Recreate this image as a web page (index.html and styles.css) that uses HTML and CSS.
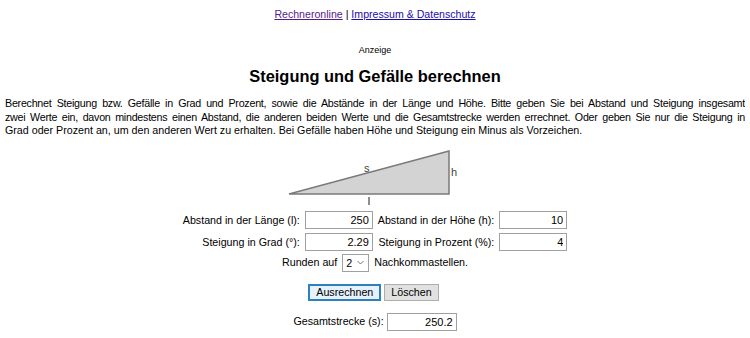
FILE: index.html
```html
<!DOCTYPE html>
<html lang="de">
<head>
  <meta charset="UTF-8" />
  <title>Steigung und Gefälle berechnen</title>
  <link rel="stylesheet" href="styles.css">
</head>
<body>

<div class="topnav">
  <a href="#" class="visited">Rechneronline</a> | <a href="#">Impressum &amp; Datenschutz</a>
</div>

<div class="ad">Anzeige</div>

<h1>Steigung und Gefälle berechnen</h1>

<div class="intro">
  <div class="intro-full">Berechnet Steigung bzw. Gefälle in Grad und Prozent, sowie die Abstände in der Länge und Höhe. Bitte geben Sie bei Abstand und Steigung insgesamt<br>zwei Werte ein, davon mindestens einen Abstand, die anderen beiden Werte und die Gesamtstrecke werden errechnet. Oder geben Sie nur die Steigung in</div>
  <div>Grad oder Prozent an, um den anderen Wert zu erhalten. Bei Gefälle haben Höhe und Steigung ein Minus als Vorzeichen.</div>
</div>

<div class="figure">
  <svg width="180" height="58" viewBox="0 0 180 58">
    <polygon points="4,46 164,3 164,46" fill="#d3d3d3" stroke="#7a7a7a" stroke-width="1.5" />
    <text x="79" y="24" class="lbl">s</text>
    <text x="166" y="28" class="lbl">h</text>
    <line x1="84" y1="49" x2="84" y2="57" stroke="#444" stroke-width="1.2" />
  </svg>
</div>

<form class="calc">
  <table class="fields">
    <tr>
      <td class="lab">Abstand in der Länge (l):</td>
      <td><input type="text" class="num" value="250"></td>
      <td class="lab">Abstand in der Höhe (h):</td>
      <td><input type="text" class="num" value="10"></td>
    </tr>
    <tr>
      <td class="lab">Steigung in Grad (°):</td>
      <td><input type="text" class="num" value="2.29"></td>
      <td class="lab">Steigung in Prozent (%):</td>
      <td><input type="text" class="num" value="4"></td>
    </tr>
  </table>

  <div class="round">
    Runden auf
    <span class="select">2
      <svg class="caret" width="7" height="5" viewBox="0 0 7 5"><polyline points="0.5,1 3.5,4 6.5,1" fill="none" stroke="#777" stroke-width="1" /></svg>
    </span>
    Nachkommastellen.
  </div>

  <div class="buttons">
    <button type="button" class="btn btn-active">Ausrechnen</button>
    <button type="button" class="btn">Löschen</button>
  </div>

  <div class="total">
    Gesamtstrecke (s):
    <input type="text" class="num" value="250.2">
  </div>
</form>

</body>
</html>
```

FILE: styles.css
```css
body {
  font-family: "Liberation Sans", Arial, sans-serif;
  font-size: 10.7px;
  margin: 0 5px;
  color: #000;
  background: #fff;
}

.topnav {
  text-align: center;
  padding-top: 8px;
  height: 18px;
  font-size: 10.6px;
}

.topnav a {
  color: #1a0dab;
}

.topnav a.visited {
  color: #551a8b;
}

.ad {
  text-align: center;
  font-size: 9px;
  margin-top: 19px;
}

h1 {
  text-align: center;
  font-size: 16.4px;
  margin: 12px 0 11px;
}

.intro {
  line-height: 13.5px;
}

.intro-full {
  text-align: justify;
  text-align-last: justify;
  letter-spacing: -0.25px;
}

.figure {
  text-align: center;
  margin-top: 10px;
  height: 58px;
}

.figure svg {
  display: inline-block;
}

.lbl {
  font-family: "Liberation Sans", Arial, sans-serif;
  font-size: 11px;
  fill: #444;
}

.fields {
  margin: 1px auto 0;
  border-collapse: separate;
  border-spacing: 5px 4px;
}

.fields td {
  padding: 0;
  height: 18px;
}

.lab {
  text-align: right;
}

.num {
  display: block;
  box-sizing: border-box;
  width: 68px;
  height: 18px;
  padding: 1px 3px;
  border: 1px solid #a0a0a0;
  font-family: "Liberation Sans", Arial, sans-serif;
  font-size: 11px;
  text-align: right;
  margin: 0;
}

.total .num {
  display: inline-block;
  width: 70px;
  vertical-align: middle;
  margin-left: 0;
}

.round {
  text-align: center;
  margin-top: -3px;
  line-height: 20px;
}

.select {
  display: inline-block;
  box-sizing: border-box;
  width: 27px;
  height: 18px;
  line-height: 16px;
  border: 1px solid #a0a0a0;
  text-align: left;
  padding-left: 3px;
  margin: 0 2px;
  vertical-align: middle;
}

.caret {
  margin-left: 2px;
  vertical-align: 2px;
}

.buttons {
  text-align: center;
  margin-top: 12px;
  padding-right: 3px;
}

.btn {
  font-family: "Liberation Sans", Arial, sans-serif;
  font-size: 10.7px;
  height: 17px;
  padding: 0 6px;
  background: #e1e1e1;
  border: 1px solid #adadad;
  margin: 0;
}

.btn-active {
  background: #e5f1fb;
  border: 2px solid #2f7fbd;
  padding: 0 6px;
}

.total {
  text-align: center;
  margin-top: 12px;
}
```
